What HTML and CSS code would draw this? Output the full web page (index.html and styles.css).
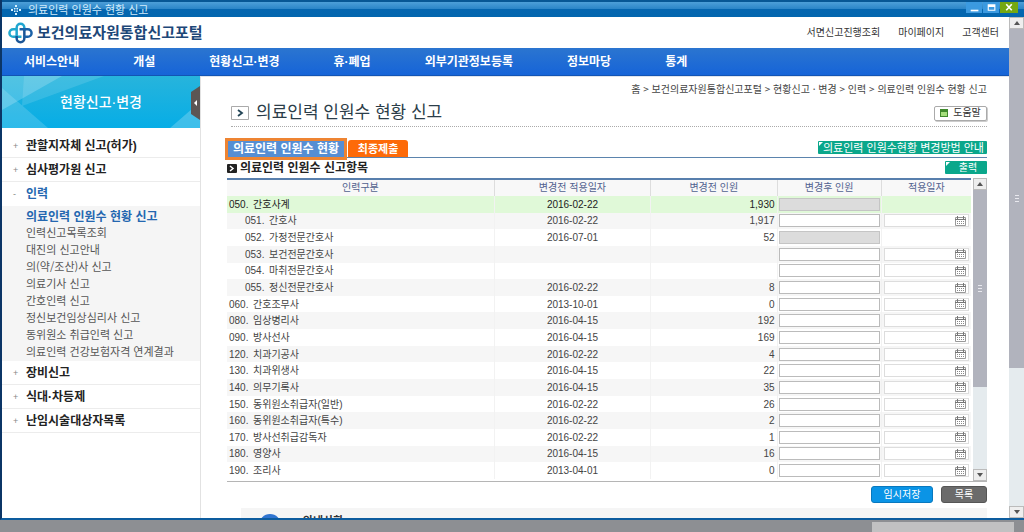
FILE: index.html
```html
<!DOCTYPE html>
<html lang="ko">
<head>
<meta charset="utf-8">
<title>의료인력 인원수 현황 신고</title>
<link rel="stylesheet" href="styles.css">
</head>
<body>
<svg class="defs" aria-hidden="true">
  <symbol id="cal" viewBox="0 0 11 10">
    <path d="M.5 1.500h10v8H.5z" fill="#fff" stroke="#999"/>
    <path d="M0 3.500h11M2.500 0v3M8.500 0v3" stroke="#777" fill="none"/>
    <path d="M2 5.500h7M2 7.500h7" stroke="#888" stroke-dasharray="1 1"/>
  </symbol>
  <symbol id="up" viewBox="0 0 6 4"><path d="M3 0l3 4H0z" fill="#555"/></symbol>
  <symbol id="down" viewBox="0 0 6 4"><path d="M0 0h6L3 4z" fill="#555"/></symbol>
</svg>

<div class="window">
  <div class="titlebar">
    <svg class="title-mark" viewBox="0 0 10 10" aria-hidden="true"><path d="M4 0h2v2H4zM4 8h2v2H4zM0 4h2v2H0zM8 4h2v2H8zM3 3h1.500v1.500H3zM5.500 3H7v1.500H5.500zM3 5.500h1.500V7H3zM5.500 5.500H7V7H5.500z" fill="#d9f2ff"/></svg>
    <span>의료인력 인원수 현황 신고</span>
    <div class="controls">
      <button aria-label="최소화"><svg viewBox="0 0 14 10"><path d="M4 7h7v1.500H4z" fill="#fff"/></svg></button>
      <button aria-label="최대화"><svg viewBox="0 0 14 10"><path d="M4 2h7v6H4zM5 4.500V7h5V4.500z" fill="#fff" fill-rule="evenodd"/></svg></button>
      <button class="close" aria-label="닫기"><svg viewBox="0 0 14 10"><path d="M4.500 2l5 5.500M9.500 2l-5 5.500" stroke="#fff" stroke-width="1.500"/></svg></button>
    </div>
  </div>

  <div class="viewport">
    <div class="page">
      <header class="header">
        <a class="logo" href="#">
          <svg viewBox="0 0 26 22" aria-hidden="true">
            <g fill="none" stroke-width="2.600">
              <path d="M9 14V5.500a4 4 0 0 1 8 0V9" stroke="#1fa5d0"/>
              <path d="M9 7H5.500a4 4 0 0 0 0 8H14" stroke="#21a9cf"/>
              <path d="M17 8v8.500a4 4 0 0 1-8 0V14" stroke="#1b5596"/>
              <path d="M12 7h8.500a4 4 0 0 1 0 8H17" stroke="#1c62a8"/>
            </g>
          </svg>
          <span>보건의료자원통합신고포털</span>
        </a>
        <nav class="util"><a href="#">서면신고진행조회</a><a href="#">마이페이지</a><a href="#">고객센터</a></nav>
      </header>
      <nav class="gnb">
        <a href="#">서비스안내</a><a href="#">개설</a><a href="#">현황신고·변경</a><a href="#">휴·폐업</a><a href="#">외부기관정보등록</a><a href="#">정보마당</a><a href="#">통계</a>
      </nav>

      <div class="columns">
        <aside class="side">
          <div class="banner">
            <svg class="facets" viewBox="0 0 198 52" preserveAspectRatio="none" aria-hidden="true">
              <path d="M0 0h60L0 34z" fill="#fff" opacity=".2"/><path d="M0 12l46 40H0z" fill="#fff" opacity=".16"/><path d="M22 0h80L20 30z" fill="#fff" opacity=".12"/><path d="M168 52l30-26v26z" fill="#fff" opacity=".22"/>
            </svg>
            <h2>현황신고·변경</h2>
            <button class="fold" aria-label="메뉴 접기"><svg viewBox="0 0 9 34"><path d="M9 0v34L0 28V6z" fill="#5c5654"/><path d="M6 14v6l-3-3z" fill="#fff"/></svg></button>
          </div>
          <ul class="menu">
            <li><a href="#">관할지자체 신고(허가)</a></li>
            <li><a href="#">심사평가원 신고</a></li>
            <li class="open"><a href="#">인력</a>
              <ul class="sub">
                <li><a class="on" href="#">의료인력 인원수 현황 신고</a></li>
                <li><a href="#">인력신고목록조회</a></li>
                <li><a href="#">대진의 신고안내</a></li>
                <li><a href="#">의(약/조산)사 신고</a></li>
                <li><a href="#">의료기사 신고</a></li>
                <li><a href="#">간호인력 신고</a></li>
                <li><a href="#">정신보건임상심리사 신고</a></li>
                <li><a href="#">동위원소 취급인력 신고</a></li>
                <li><a href="#">의료인력 건강보험자격 연계결과</a></li>
              </ul>
            </li>
            <li><a href="#">장비신고</a></li>
            <li><a href="#">식대·차등제</a></li>
            <li><a href="#">난임시술대상자목록</a></li>
          </ul>
        </aside>

        <main class="main">
          <div class="crumbs">홈 &gt; 보건의료자원통합신고포털 &gt; 현황신고 · 변경 &gt; 인력 &gt; 의료인력 인원수 현황 신고</div>
          <div class="heading">
            <svg class="arrow" viewBox="0 0 18 14" aria-hidden="true"><path d="M.5.5h17v13H.5z" fill="#fff" stroke="#aaa"/><path d="M7 4l4 3-4 3" fill="none" stroke="#245" stroke-width="1.800"/></svg>
            <h1>의료인력 인원수 현황 신고</h1>
            <button class="help"><svg viewBox="0 0 8 8" aria-hidden="true"><path d="M0 0h8v8H0z" fill="#3f8a2c"/><path d="M1 3h6v4H1z" fill="#a5df7c"/></svg>도움말</button>
          </div>

          <div class="tabs">
            <button class="tab current">의료인력 인원수 현황</button>
            <button class="tab submit">최종제출</button>
            <button class="green guide">의료인력 인원수현황 변경방법 안내</button>
          </div>
          <div class="section">
            <svg viewBox="0 0 10 9" aria-hidden="true"><rect width="10" height="9" rx="1" fill="#222"/><path d="M3 2l3 2.500L3 7" fill="none" stroke="#fff" stroke-width="1.500"/></svg>
            <h3>의료인력 인원수 신고항목</h3>
            <button class="green print">출력</button>
          </div>

          <div class="grid">
            <table>
              <colgroup><col class="c-name"><col class="c-from"><col class="c-before"><col class="c-after"><col class="c-date"></colgroup>
              <thead><tr><th>인력구분</th><th>변경전 적용일자</th><th>변경전 인원</th><th>변경후 인원</th><th>적용일자</th></tr></thead>
              <tbody>
                <tr class="total"><td><b>050.</b>간호사계</td><td>2016-02-22</td><td>1,930</td><td><input aria-label="간호사계 변경후 인원" disabled></td><td></td></tr>
                <tr class="child"><td><b>051.</b>간호사</td><td>2016-02-22</td><td>1,917</td><td><input aria-label="간호사 변경후 인원"></td><td><div class="date"><input aria-label="간호사 적용일자"><button aria-label="달력"><svg><use href="#cal"/></svg></button></div></td></tr>
                <tr class="child"><td><b>052.</b>가정전문간호사</td><td>2016-07-01</td><td>52</td><td><input aria-label="가정전문간호사 변경후 인원" disabled></td><td></td></tr>
                <tr class="child"><td><b>053.</b>보건전문간호사</td><td></td><td></td><td><input aria-label="보건전문간호사 변경후 인원"></td><td><div class="date"><input aria-label="보건전문간호사 적용일자"><button aria-label="달력"><svg><use href="#cal"/></svg></button></div></td></tr>
                <tr class="child"><td><b>054.</b>마취전문간호사</td><td></td><td></td><td><input aria-label="마취전문간호사 변경후 인원"></td><td><div class="date"><input aria-label="마취전문간호사 적용일자"><button aria-label="달력"><svg><use href="#cal"/></svg></button></div></td></tr>
                <tr class="child"><td><b>055.</b>정신전문간호사</td><td>2016-02-22</td><td>8</td><td><input aria-label="정신전문간호사 변경후 인원"></td><td><div class="date"><input aria-label="정신전문간호사 적용일자"><button aria-label="달력"><svg><use href="#cal"/></svg></button></div></td></tr>
                <tr><td><b>060.</b>간호조무사</td><td>2013-10-01</td><td>0</td><td><input aria-label="간호조무사 변경후 인원"></td><td><div class="date"><input aria-label="간호조무사 적용일자"><button aria-label="달력"><svg><use href="#cal"/></svg></button></div></td></tr>
                <tr><td><b>080.</b>임상병리사</td><td>2016-04-15</td><td>192</td><td><input aria-label="임상병리사 변경후 인원"></td><td><div class="date"><input aria-label="임상병리사 적용일자"><button aria-label="달력"><svg><use href="#cal"/></svg></button></div></td></tr>
                <tr><td><b>090.</b>방사선사</td><td>2016-04-15</td><td>169</td><td><input aria-label="방사선사 변경후 인원"></td><td><div class="date"><input aria-label="방사선사 적용일자"><button aria-label="달력"><svg><use href="#cal"/></svg></button></div></td></tr>
                <tr><td><b>120.</b>치과기공사</td><td>2016-02-22</td><td>4</td><td><input aria-label="치과기공사 변경후 인원"></td><td><div class="date"><input aria-label="치과기공사 적용일자"><button aria-label="달력"><svg><use href="#cal"/></svg></button></div></td></tr>
                <tr><td><b>130.</b>치과위생사</td><td>2016-04-15</td><td>22</td><td><input aria-label="치과위생사 변경후 인원"></td><td><div class="date"><input aria-label="치과위생사 적용일자"><button aria-label="달력"><svg><use href="#cal"/></svg></button></div></td></tr>
                <tr><td><b>140.</b>의무기록사</td><td>2016-04-15</td><td>35</td><td><input aria-label="의무기록사 변경후 인원"></td><td><div class="date"><input aria-label="의무기록사 적용일자"><button aria-label="달력"><svg><use href="#cal"/></svg></button></div></td></tr>
                <tr><td><b>150.</b>동위원소취급자(일반)</td><td>2016-02-22</td><td>26</td><td><input aria-label="동위원소취급자(일반) 변경후 인원"></td><td><div class="date"><input aria-label="동위원소취급자(일반) 적용일자"><button aria-label="달력"><svg><use href="#cal"/></svg></button></div></td></tr>
                <tr><td><b>160.</b>동위원소취급자(특수)</td><td>2016-02-22</td><td>2</td><td><input aria-label="동위원소취급자(특수) 변경후 인원"></td><td><div class="date"><input aria-label="동위원소취급자(특수) 적용일자"><button aria-label="달력"><svg><use href="#cal"/></svg></button></div></td></tr>
                <tr><td><b>170.</b>방사선취급감독자</td><td>2016-02-22</td><td>1</td><td><input aria-label="방사선취급감독자 변경후 인원"></td><td><div class="date"><input aria-label="방사선취급감독자 적용일자"><button aria-label="달력"><svg><use href="#cal"/></svg></button></div></td></tr>
                <tr><td><b>180.</b>영양사</td><td>2016-04-15</td><td>16</td><td><input aria-label="영양사 변경후 인원"></td><td><div class="date"><input aria-label="영양사 적용일자"><button aria-label="달력"><svg><use href="#cal"/></svg></button></div></td></tr>
                <tr><td><b>190.</b>조리사</td><td>2013-04-01</td><td>0</td><td><input aria-label="조리사 변경후 인원"></td><td><div class="date"><input aria-label="조리사 적용일자"><button aria-label="달력"><svg><use href="#cal"/></svg></button></div></td></tr>
              </tbody>
            </table>
            <div class="scroll">
              <button aria-label="위로"><svg><use href="#up"/></svg></button>
              <div class="thumb"></div>
              <div class="track"></div>
              <button aria-label="아래로"><svg><use href="#down"/></svg></button>
            </div>
          </div>

          <div class="actions"><button class="save">임시저장</button><button class="list">목록</button></div>
          <div class="notice"><span class="dot"></span><strong>안내사항</strong></div>
        </main>
      </div>
    </div>

    <div class="scroll outer">
      <button aria-label="위로"><svg><use href="#up"/></svg></button>
      <div class="thumb"></div>
      <div class="track"></div>
      <button aria-label="아래로"><svg><use href="#down"/></svg></button>
    </div>
  </div>
</div>
<div class="hscroll"><div class="hthumb"></div></div>
</body>
</html>
```

FILE: styles.css
```css
*, ::before, ::after { box-sizing: border-box; }
body {
  margin: 0;
  height: 100vh;
  display: flex;
  flex-direction: column;
  overflow: hidden;
  background: #8d8f93;
  color: #444;
  font: 10px/14px "Liberation Sans", "Noto Sans CJK KR", sans-serif;
}
a { color: inherit; text-decoration: none; white-space: nowrap; }
button { border: 0; padding: 0; background: none; color: inherit; font: inherit; white-space: nowrap; }
button svg { display: block; }
h1, h2, h3, ul { margin: 0; padding: 0; }
ul { list-style: none; }
.defs { position: absolute; width: 0; height: 0; }

.window {
  flex: 1;
  min-height: 0;
  display: flex;
  flex-direction: column;
  border-left: 2px solid #0b3566;
  border-bottom: 2px solid #0d5c9e;
}
.titlebar {
  flex: none;
  display: flex;
  align-items: center;
  gap: 7px;
  height: 17px;
  padding-left: 9px;
  border-top: 2px solid #075795;
  background: linear-gradient(#4d9fd8, #2c86c8 45%, #0566b0 50%, #0366ae);
  color: #d3ecfb;
  font-size: 11px;
}
.title-mark { width: 10px; height: 10px; }
.controls { display: flex; gap: 1px; margin: 0 6px 4px auto; }
.controls button { width: 16px; height: 11px; background: #3b9ae0; }
.controls .close { width: 18px; background: #74a812; }
.controls svg { width: 100%; height: 100%; }

.viewport { flex: 1; min-height: 0; display: flex; background: #fff; }
.page { flex: 1; min-width: 0; display: flex; flex-direction: column; overflow: hidden; }

.header {
  flex: none;
  display: flex;
  align-items: center;
  justify-content: space-between;
  height: 31px;
  padding: 0 10px 0 6px;
}
.logo { display: flex; align-items: center; gap: 4px; color: #1d4778; font-size: 15px; font-weight: bold; }
.logo svg { width: 25px; height: 22px; }
.util { display: flex; gap: 18px; color: #333; }

.gnb {
  flex: none;
  display: flex;
  align-items: center;
  gap: 54px;
  height: 28px;
  padding-left: 22px;
  border-bottom: 1px solid #1254b4;
  background: linear-gradient(#2b75d0, #1664d8);
  color: #fff;
  font-size: 12px;
  font-weight: bold;
}

.columns { flex: 1; min-height: 0; display: flex; }
.side { flex: none; width: 199px; border-right: 1px solid #e2e2e2; }
.banner {
  position: relative;
  display: flex;
  align-items: center;
  justify-content: center;
  height: 52px;
  background: linear-gradient(#27b4dc, #06ade6);
  color: #fff;
}
.banner h2 { position: relative; font-size: 14px; font-weight: 500; }
.facets { position: absolute; inset: 0; width: 100%; height: 100%; }
.fold { position: absolute; top: 10px; right: 0; width: 9px; height: 34px; }
.fold svg { width: 9px; height: 34px; }

.menu { padding-top: 6px; }
.menu > li > a {
  display: flex;
  align-items: center;
  height: 24px;
  border-bottom: 1px solid #ececec;
  color: #222;
  font-size: 12px;
  font-weight: bold;
}
.menu > li > a::before { content: "+"; width: 24px; padding-left: 11px; color: #888; font-size: 9px; font-weight: normal; }
.menu > .open > a { border-bottom: 0; color: #2467b0; }
.menu > .open > a::before { content: "-"; }
.sub { padding: 1px 0; background: #f5f5f5; }
.sub a { display: block; padding-left: 24px; color: #555; font-family: "Noto Sans CJK KR", sans-serif; font-size: 11px; line-height: 17px; }
.sub .on { color: #2467b0; font-size: 12px; font-weight: bold; }

.main { flex: 1; min-width: 0; padding: 5px 22px 0 26px; border-top: 1px solid #dfe4ec; overflow: hidden; }
.crumbs { text-align: right; color: #444; font-family: "Noto Sans CJK KR", sans-serif; white-space: nowrap; }
.heading {
  display: flex;
  align-items: center;
  gap: 7px;
  height: 27px;
  margin: 4px 0 11px 4px;
  border-bottom: 1px dotted #aaa;
}
.heading h1 { color: #2b3d49; font-size: 17px; font-weight: normal; line-height: 22px; }
.arrow { width: 18px; height: 14px; }
.help {
  display: flex;
  align-items: center;
  justify-content: center;
  gap: 5px;
  width: 53px;
  height: 15px;
  margin-left: auto;
  border: 1px solid #aaa;
  border-radius: 2px;
  background: #fff;
  box-shadow: 1px 1px 0 #ccc;
  color: #333;
}
.help svg { width: 8px; height: 8px; }

.tabs { display: flex; align-items: flex-end; gap: 1px; height: 20px; border-bottom: 1px solid #5b84ad; }
.tab { color: #fff; font-weight: bold; }
.tab.current { height: 22px; margin: 0 0 -3px -2px; padding: 0 5px; border: 3px solid #ee8432; background: #568ed3; font-size: 12px; line-height: 16px; }
.tab.submit { width: 60px; height: 17px; border-radius: 3px 3px 0 0; background: #fd6a08; font-size: 11px; }
.green {
  position: relative;
  margin-left: auto;
  height: 13px;
  border-radius: 1px;
  background: #0aa78b;
  color: #fff;
  line-height: 13px;
}
.green::before { content: ""; position: absolute; top: 1px; left: 1px; border: 2px solid; border-color: #fff transparent transparent #fff; }
.guide { padding: 0 3px 0 5px; margin-bottom: 3px; font-family: "Noto Sans CJK KR", sans-serif; font-size: 11px; }
.print { width: 42px; padding-left: 4px; }

.section { display: flex; align-items: center; gap: 3px; height: 20px; }
.section svg { width: 10px; height: 9px; }
.section h3 { color: #222; font-size: 12px; line-height: 18px; }
.section .print { margin-bottom: 1px; }

.grid { display: flex; align-items: flex-start; gap: 2px; border-bottom: 1px solid #b5b5b5; }
table {
  flex: 1;
  min-width: 0;
  height: 301px;
  margin-bottom: 2px;
  table-layout: fixed;
  border-collapse: separate;
  border-spacing: 0;
  border-top: 2px solid #587fad;
}
.c-name { width: 36%; }
.c-from { width: 21%; }
.c-before { width: 17%; }
.c-after { width: 14%; }
.c-date { width: 12%; }
th { height: 16px; padding: 0; border-right: 1px solid #ddd; background: #f8f8f8; color: #51618f; font-weight: normal; line-height: 14px; }
td { height: 16px; padding: 0 2px; border-right: 1px solid #f2f2f2; line-height: 13px; text-align: center; white-space: nowrap; }
th:last-child, td:last-child { border-right: 0; }
td:first-child { text-align: left; }
td:nth-child(3) { padding-right: 2px; text-align: right; }
td:nth-child(4) { padding: 0 1px; }
td b { display: inline-block; width: 24px; font-weight: normal; }
.child td:first-child { padding-left: 18px; }
tbody tr:nth-child(even) { background: #f6f6f6; }
tbody .total { background: #e0f9d8; color: #222; }
input { display: block; width: 100%; min-width: 0; height: 13px; margin: 0; padding: 0 2px; border: 1px solid #bbb; border-radius: 0; background: #fff; font: inherit; }
input:disabled { background: #dcdcdc; border-color: #c5c5c5; }
.date { display: flex; align-items: center; height: 13px; padding-right: 2px; border: 1px solid #ddd; background: #fff; }
.date input { flex: 1; height: 11px; border: 0; }
.date svg { width: 11px; height: 10px; }

.scroll { flex: none; align-self: stretch; display: flex; flex-direction: column; width: 14px; background: #e5ebee; }
.scroll button { display: grid; place-items: center; height: 12px; border: 1px solid #bbb; background: #eee; }
.scroll button svg { width: 6px; height: 4px; }
.scroll .thumb { flex: 197; background: #b1b3bd; }
.scroll .track { flex: 82; }
.scroll .thumb { display: grid; place-items: center; }
.scroll .thumb::after { content: ""; width: 4px; height: 8px; background: repeating-linear-gradient(#e8e8ee 0 1px, #b1b3bd 1px 3px); }
.outer { width: 15px; }
.outer .thumb { flex: 340; }
.outer .track { flex: 138; }

.actions { display: flex; justify-content: flex-end; gap: 8px; margin: 4px 0 5px; }
.actions button { height: 17px; border-radius: 3px; color: #fff; font-size: 10px; line-height: 15px; }
.save { width: 62px; border: 1px solid #0878be; background: #0a94e6; }
.list { width: 46px; border: 1px solid #555; background: #6b6b6b; }
.notice { display: flex; gap: 22px; height: 40px; margin-left: 14px; padding: 6px 18px; background: #f5f5f5; color: #333; font-size: 11px; line-height: 14px; }
.dot { width: 22px; height: 22px; border-radius: 50%; background: #2f74d0; }

.hscroll { flex: none; display: flex; justify-content: flex-end; height: 12px; padding: 2px 10px 0 0; background: #8d8f93; }
.hthumb { width: 14%; background: #c1c1c2; }
```
